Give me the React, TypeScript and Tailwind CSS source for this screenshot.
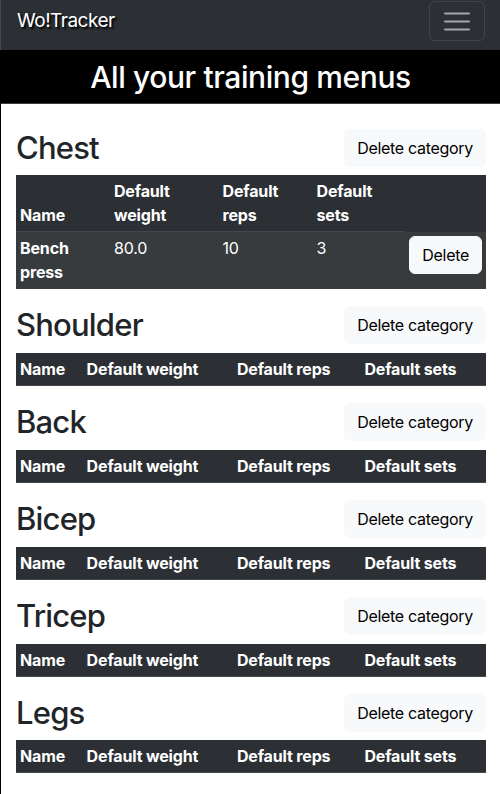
import React from "react";

type Exercise = { name: string; weight: string; reps: number; sets: number };

const categories: { name: string; exercises: Exercise[] }[] = [
    { name: "Chest", exercises: [{ name: "Bench press", weight: "80.0", reps: 10, sets: 3 }] },
    { name: "Shoulder", exercises: [] },
    { name: "Back", exercises: [] },
    { name: "Bicep", exercises: [] },
    { name: "Tricep", exercises: [] },
    { name: "Legs", exercises: [] },
];

function CategoryTable({ exercises }: { exercises: Exercise[] }) {
    const th = "px-1 py-1 text-left align-bottom font-bold border-b border-[#42474c]";
    const td = "px-1 py-1 align-top border-b border-[#3a3e42]";
    return (
        <table
            className={`w-full border-collapse text-white text-[16px] leading-6 tracking-[-0.15px] bg-[#2c3035] ${
                exercises.length ? "mb-4" : "mb-[16.5px]"
            }`}
        >
            <thead>
                <tr>
                    <th className={th}>Name</th>
                    <th className={th}>Default weight</th>
                    <th className={th}>Default reps</th>
                    <th className={th}>Default sets</th>
                </tr>
            </thead>
            <tbody>
                {exercises.map((ex) => (
                    <tr key={ex.name} className="bg-[#373b3e]">
                        <th className={`${td} text-left font-bold`}>{ex.name}</th>
                        <td className={td}>{ex.weight}</td>
                        <td className={td}>{ex.reps}</td>
                        <td className={td}>{ex.sets}</td>
                        <td className={`${td} text-right`}>
                            <button className="bg-[#f8f9fa] border border-[#f8f9fa] text-black rounded-md px-3 py-1.5 leading-6 tracking-[-0.3px]">
                                Delete
                            </button>
                        </td>
                    </tr>
                ))}
            </tbody>
        </table>
    );
}

export default function App() {
    return (
        <div className="min-h-screen bg-white font-['Inter',sans-serif] text-[#212529]">
            {/* Navbar */}
            <nav className="h-[50px] pb-[9px] pl-4 pr-[15px] flex items-center justify-between bg-[#2c3035] border-l border-[#45494e]">
                <span className="text-white text-[19px] tracking-[-0.5px] leading-[30px] [text-shadow:2px_2px_2px_#000]">
                    Wo!Tracker
                </span>
                <button className="w-[56px] h-[40px] mt-[1px] flex items-center justify-center border border-white/10 rounded-md">
                    <svg width="30" height="30" viewBox="0 0 30 30">
                        <path
                            d="M3 7.5h24M3 15.5h24M3 23.5h24"
                            stroke="#a4a6a9"
                            strokeWidth="2"
                            strokeLinecap="round"
                        />
                    </svg>
                </button>
            </nav>

            <div className="border-l border-black">
                {/* Title band */}
                <div className="h-[54px] bg-black border-b border-[#3c3c3c] flex items-center justify-center">
                    <h1 className="text-white text-[30px] tracking-[-0.4px] font-medium leading-none">
                        All your training menus
                    </h1>
                </div>

                {/* Categories */}
                <div className="pl-[15px] pr-[14px] pt-6 pb-4">
                    {categories.map((cat) => (
                        <section key={cat.name}>
                            <div className="flex items-center justify-between mb-2">
                                <h2 className="text-[31px] tracking-[-0.8px] font-medium leading-[38.4px] pt-[1px]">
                                    {cat.name}
                                </h2>
                                <button className="bg-[#f8f9fa] border border-[#f8f9fa] text-black rounded-md px-3 py-1.5 text-[16px] leading-6 tracking-[-0.3px]">
                                    Delete category
                                </button>
                            </div>
                            <CategoryTable exercises={cat.exercises} />
                        </section>
                    ))}
                </div>
            </div>
        </div>
    );
}
